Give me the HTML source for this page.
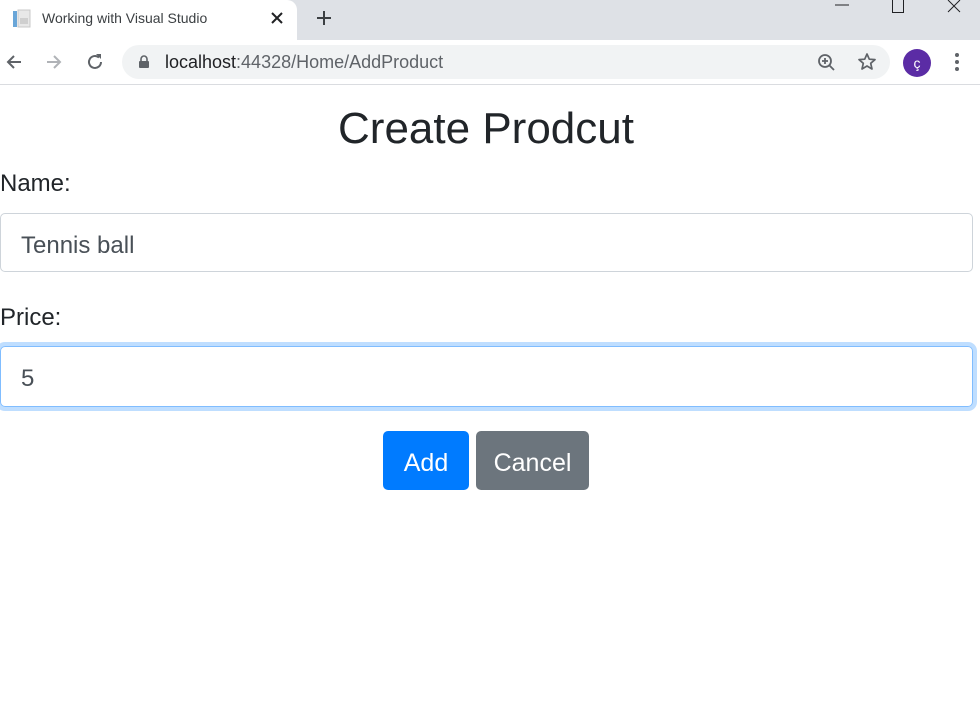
<!DOCTYPE html>
<html><head><meta charset="utf-8"><style>
*{box-sizing:border-box;margin:0;padding:0}
body{width:980px;height:709px;overflow:hidden;background:#fff;font-family:"Liberation Sans",sans-serif;position:relative;color:#212529}
.tabbar{position:absolute;left:0;top:0;width:980px;height:40px;background:#dee1e6}
.tab{position:absolute;left:0;top:0;width:297px;height:40px;background:#fff;border-radius:0 10px 0 0}
.toolbar{position:absolute;left:0;top:40px;width:980px;height:45px;background:#fff;border-bottom:1px solid #dadce0}
.omni{position:absolute;left:122px;top:5px;width:768px;height:34px;background:#f1f3f4;border-radius:17px}
.abs{position:absolute}
h1{position:absolute;left:0;width:972px;top:104px;text-align:center;font-size:44px;font-weight:400;color:#212529;letter-spacing:0}
.lbl{position:absolute;left:0;font-size:24px;color:#212529}
.inp{position:absolute;left:0;width:973px;height:59px;border:1px solid #ced4da;border-radius:5px;font-size:24px;color:#495057;padding-left:20px;padding-top:3px;line-height:57px}
.btn{position:absolute;top:431px;height:59px;border-radius:5px;color:#fff;font-size:25px;line-height:59px;padding-top:3px;text-align:center}
</style></head><body>
<div class="tabbar"></div>
<div class="tab"></div>
<svg class="abs" style="left:12px;top:9px" width="20" height="20"><rect x="1" y="2" width="4" height="16" fill="#6aa6d8"/><rect x="6" y="1" width="12" height="17" fill="#e8e8e8" stroke="#c8c8c8"/><rect x="8" y="9" width="8" height="6" fill="#cfcfcf"/></svg>
<div class="abs" style="left:42px;top:10px;font-size:14px;color:#3c4043">Working with Visual Studio</div>
<svg class="abs" style="left:270px;top:11px" width="14" height="14"><path d="M2 2L12 12M12 2L2 12" stroke="#202124" stroke-width="2"/></svg>
<svg class="abs" style="left:316px;top:10px" width="16" height="16"><path d="M8 1V15M1 8H15" stroke="#3c4043" stroke-width="2"/></svg>
<svg class="abs" style="left:834px;top:0" width="16" height="10"><path d="M1 5H15" stroke="#202124" stroke-width="1"/></svg>
<svg class="abs" style="left:891px;top:0" width="14" height="13"><path d="M1.5 0V12.5H12.5V0" fill="none" stroke="#202124" stroke-width="1"/></svg>
<svg class="abs" style="left:947px;top:0" width="16" height="13"><path d="M1 0L13 12M13 0L1 12" stroke="#202124" stroke-width="1"/></svg>
<div class="toolbar">
<svg class="abs" style="left:5px;top:13px" width="18" height="18"><path d="M16 9H3M9 3L3 9L9 15" fill="none" stroke="#5f6368" stroke-width="2"/></svg>
<svg class="abs" style="left:45px;top:13px" width="18" height="18"><path d="M2 9H15M9 3L15 9L9 15" fill="none" stroke="#b0b3b7" stroke-width="2"/></svg>
<svg class="abs" style="left:85px;top:12px" width="20" height="20"><path d="M16 10A6 6 0 1 1 14 5.5" fill="none" stroke="#5f6368" stroke-width="2"/><path d="M11 2H16V7Z" fill="#5f6368"/></svg>
<div class="omni">
<svg class="abs" style="left:16px;top:10px" width="12" height="14"><path d="M3 6V4A3 3 0 0 1 9 4V6" fill="none" stroke="#5f6368" stroke-width="1.6"/><rect x="1" y="6" width="10" height="7" rx="1" fill="#5f6368"/></svg>
<div class="abs" style="left:43px;top:7px;font-size:18px;color:#202124">localhost<span style="color:#5f6368">:44328/Home/AddProduct</span></div>
<svg class="abs" style="left:695px;top:8px" width="20" height="20"><circle cx="8" cy="8" r="6" fill="none" stroke="#5f6368" stroke-width="1.8"/><path d="M12.5 12.5L17 17M5 8H11M8 5V11" stroke="#5f6368" stroke-width="1.8"/></svg>
<svg class="abs" style="left:735px;top:7px" width="20" height="20"><path d="M10 2L12.3 7.2L18 7.6L13.7 11.3L15 17L10 14L5 17L6.3 11.3L2 7.6L7.7 7.2Z" fill="none" stroke="#5f6368" stroke-width="1.7" stroke-linejoin="round"/></svg>
</div>
<div class="abs" style="left:903px;top:9px;width:28px;height:28px;border-radius:50%;background:#5b2ca5;color:#fff;font-size:14px;text-align:center;line-height:28px">ç</div>
<svg class="abs" style="left:953px;top:12px" width="8" height="20"><circle cx="4" cy="3" r="2" fill="#5f6368"/><circle cx="4" cy="10" r="2" fill="#5f6368"/><circle cx="4" cy="17" r="2" fill="#5f6368"/></svg>
</div>
<h1>Create Prodcut</h1>
<div class="lbl" style="top:170px">Name:</div>
<div class="inp" style="top:213px">Tennis ball</div>
<div class="lbl" style="top:304px">Price:</div>
<div class="inp" style="top:346px;height:61px;border-color:#80bdff;box-shadow:0 0 0 4px rgba(0,123,255,.25)">5</div>
<div class="btn" style="left:383px;width:86px;background:#007bff">Add</div>
<div class="btn" style="left:476px;width:113px;background:#6c757d">Cancel</div>
</body></html>
